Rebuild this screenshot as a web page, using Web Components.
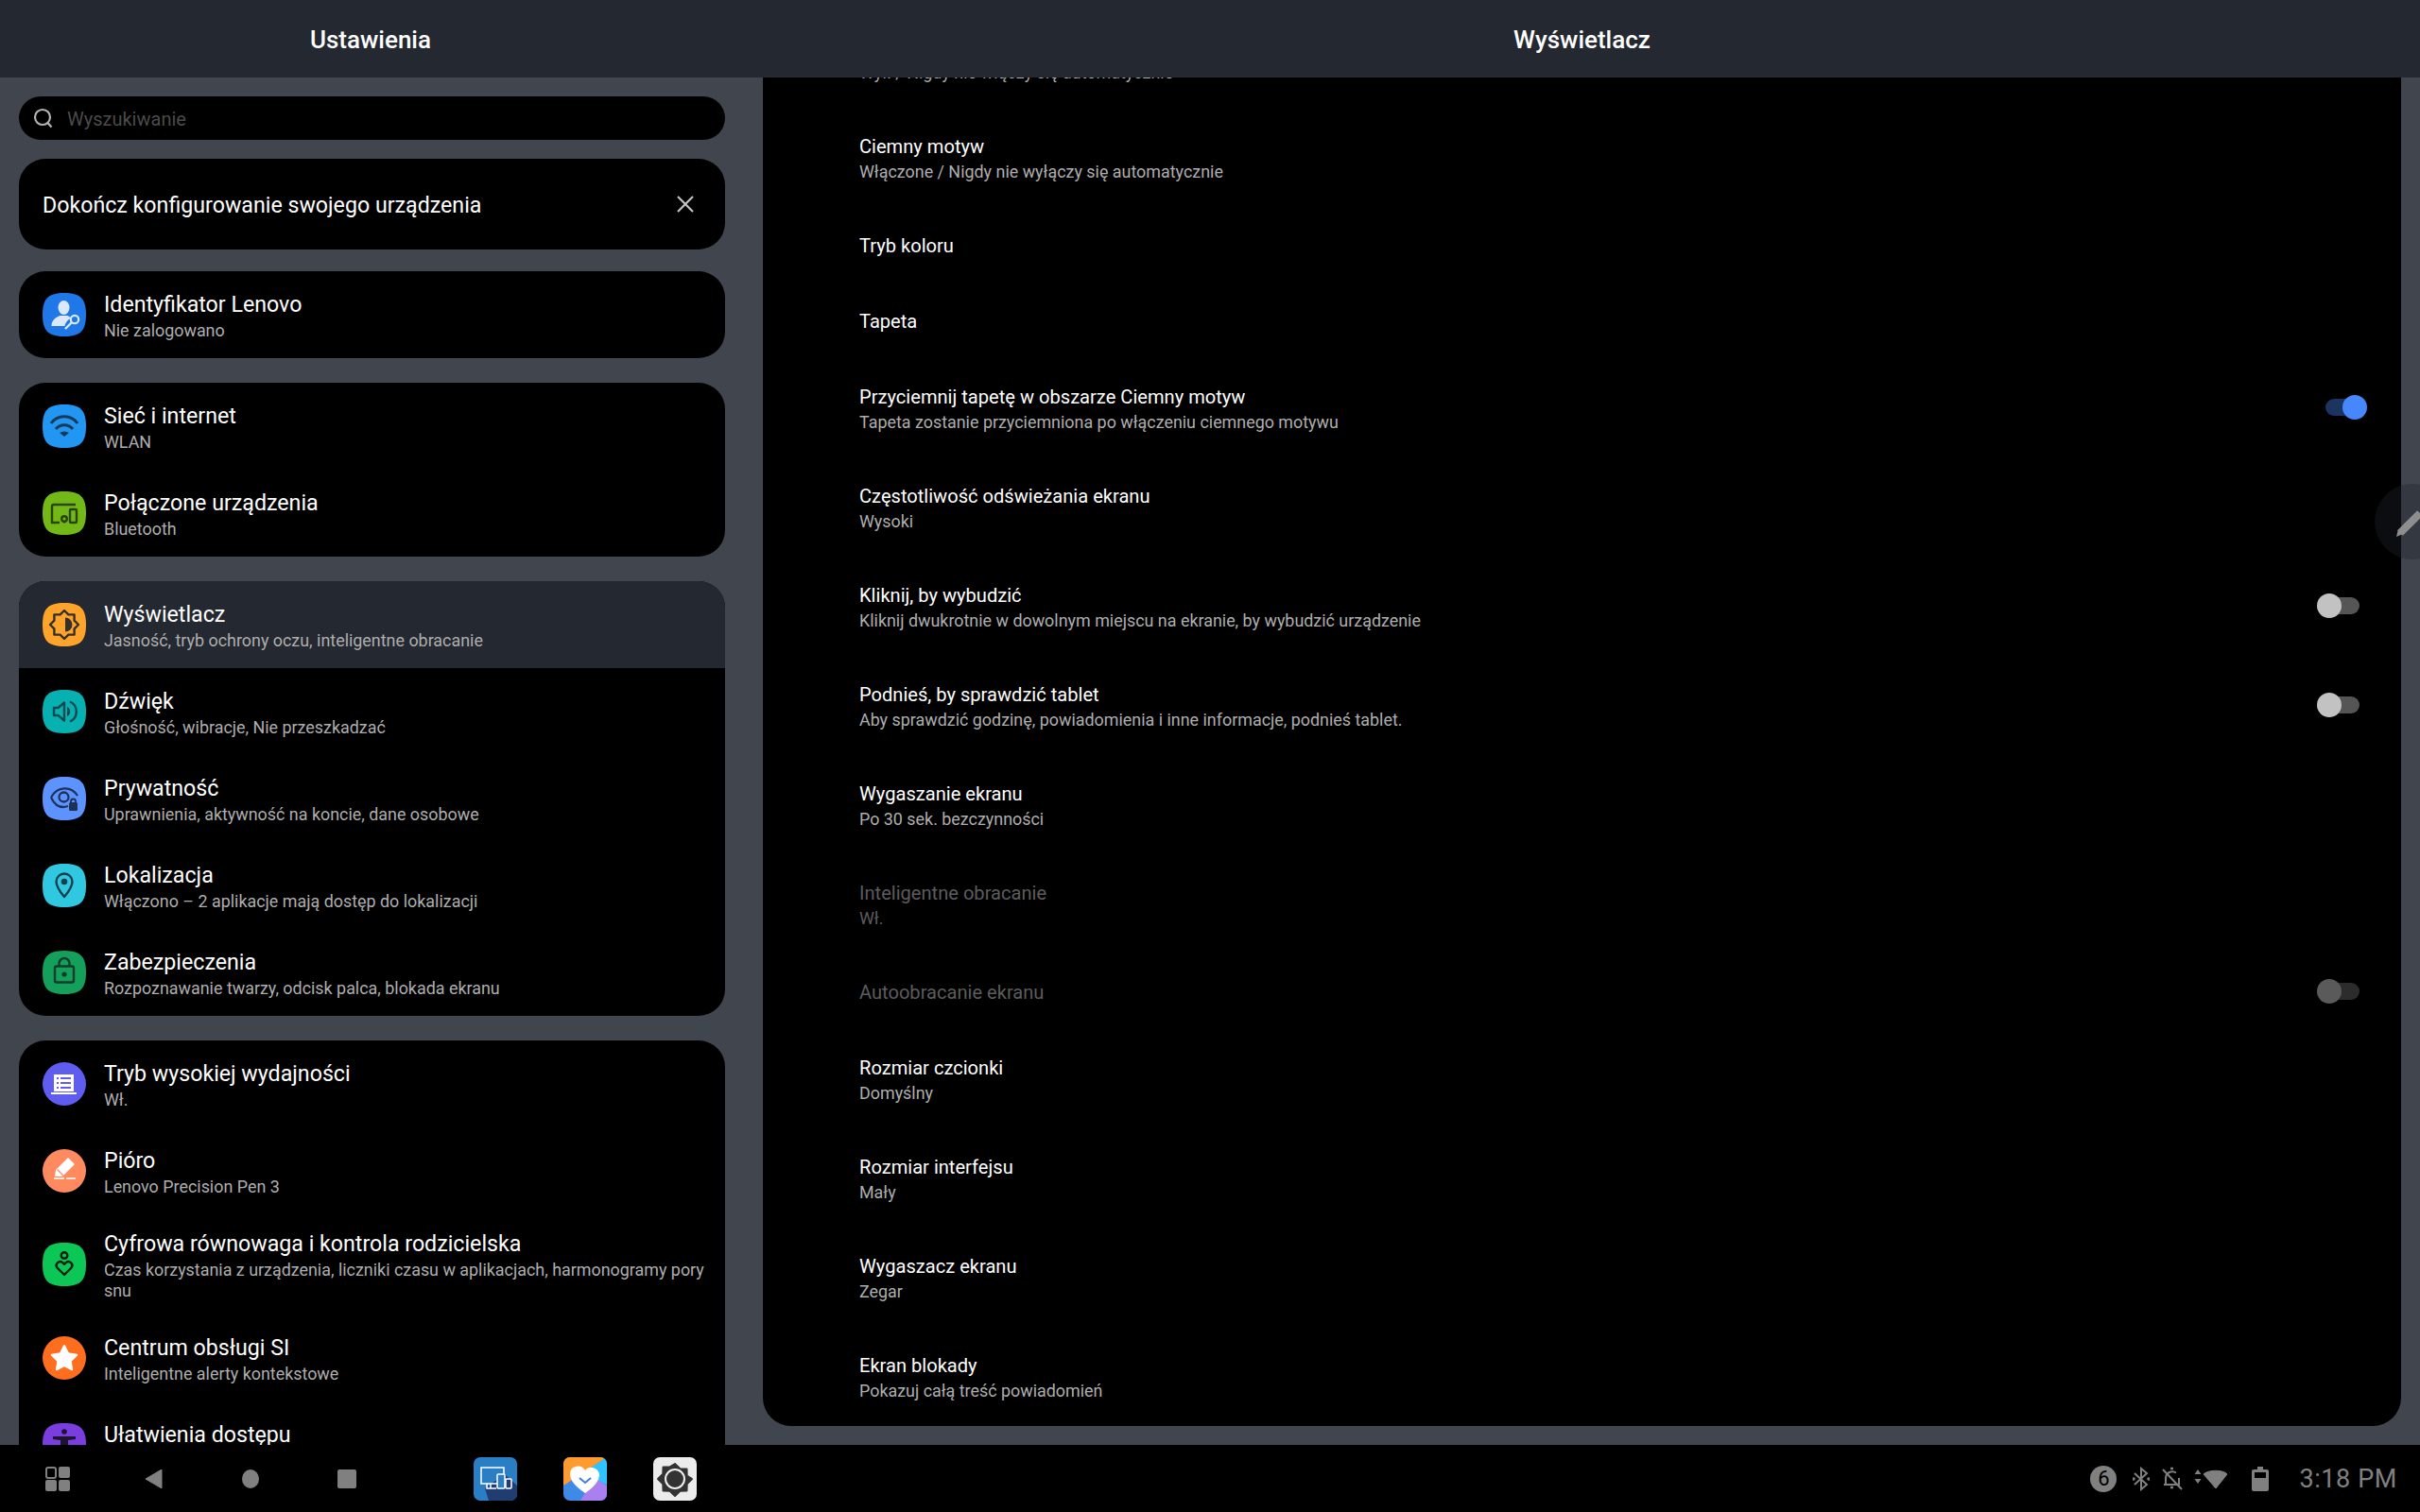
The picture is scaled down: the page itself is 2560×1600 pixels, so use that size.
<!DOCTYPE html>
<html lang="pl">
<head>
<meta charset="utf-8">
<title>Ustawienia</title>
<style>
html,body{margin:0;width:2560px;height:1600px;overflow:hidden;background:#41464e;font-family:Roboto,"Liberation Sans",sans-serif;}
</style>
</head>
<body>
<settings-app>
  <span slot="left-title">Ustawienia</span>
  <span slot="right-title">Wyświetlacz</span>

  <search-box slot="side" placeholder="Wyszukiwanie"></search-box>
  <setup-banner slot="side">Dokończ konfigurowanie swojego urządzenia</setup-banner>

  <settings-group slot="side">
    <settings-item label="Identyfikator Lenovo" sub="Nie zalogowano" color="#1f77e8">
      <svg viewBox="0 0 46 46"><ellipse cx="22.5" cy="15.5" rx="6" ry="7.500" fill="#dbe8fc"/><path d="M9.500 35c0-6 4-9 9-11h8c2 1 3 2 4 3-4 1-6 4-7 8z" fill="#dbe8fc"/><circle cx="34" cy="28" r="4.200" fill="none" stroke="#dbe8fc" stroke-width="2.200"/><path d="M31 31l-7 7" stroke="#dbe8fc" stroke-width="2.400"/></svg>
    </settings-item>
  </settings-group>

  <settings-group slot="side">
    <settings-item label="Sieć i internet" sub="WLAN" color="#2196f3">
      <svg viewBox="0 0 46 46" fill="none" stroke="#173a58" stroke-width="3"><path d="M9 20a17 17 0 0 1 28 0"/><path d="M14 26a11.500 11.500 0 0 1 18 0"/><path d="M18 30q5-3 10 0l-5 4z" fill="#173a58" stroke="none"/></svg>
    </settings-item>
    <settings-item label="Połączone urządzenia" sub="Bluetooth" color="#72b816">
      <svg viewBox="0 0 46 46" fill="none" stroke="#2a4410" stroke-width="2.4"><path d="M35 14H12a2 2 0 0 0-2 2v17h8"/><rect x="29" y="19" width="7" height="14" rx="1"/><circle cx="23" cy="29" r="2.8"/><path d="M23 32v1.5"/></svg>
    </settings-item>
  </settings-group>

  <settings-group slot="side">
    <settings-item label="Wyświetlacz" sub="Jasność, tryb ochrony oczu, inteligentne obracanie" color="#ffa42b" selected>
      <svg viewBox="0 0 46 46" fill="none" stroke="#33302a" stroke-width="2.4" stroke-linejoin="round"><path d="M23 8l4.400 4.400 6.200 0 0 6.200L38 23l-4.400 4.400 0 6.200-6.200 0L23 38l-4.400-4.400-6.200 0 0-6.200L8 23l4.400-4.400 0-6.200 6.200 0z"/><path d="M24 15.500a7.500 7.500 0 0 1 0 15z" fill="#33302a" stroke="none"/></svg>
    </settings-item>
    <settings-item label="Dźwięk" sub="Głośność, wibracje, Nie przeszkadzać" color="#08b1b1">
      <svg viewBox="0 0 46 46" fill="none" stroke="#0d4a50" stroke-width="2.400"><path d="M12 19h4.500l6.500-5.500v19L16.500 27H12z" stroke-linejoin="round"/><path d="M26 18a5.500 5.500 0 0 1 0 10z" fill="#0d4a50" stroke="none"/><path d="M29 12.500a11.500 11.500 0 0 1 0 21"/></svg>
    </settings-item>
    <settings-item label="Prywatność" sub="Uprawnienia, aktywność na koncie, dane osobowe" color="#5c93ff">
      <svg viewBox="0 0 46 46" fill="none" stroke="#1e3158" stroke-width="2.300"><path d="M9 22C15 10 30 9 37 20M27 31C19 34 13 30 9 22"/><circle cx="22.500" cy="21.500" r="5"/><rect x="28" y="27" width="9" height="9" rx="1.500" fill="#1e3158" stroke="none"/><path d="M30 28v-2a2.500 2.500 0 0 1 5 0v2" stroke-width="1.800"/></svg>
    </settings-item>
    <settings-item label="Lokalizacja" sub="Włączono – 2 aplikacje mają dostęp do lokalizacji" color="#2fc8e0">
      <svg viewBox="0 0 46 46" fill="none" stroke="#153f4c" stroke-width="2.400"><path d="M23 35C17.500 28.500 14.500 24 14.500 19a8.500 8.500 0 0 1 17 0c0 5-3 9.500-8.500 16z" stroke-linejoin="round"/><circle cx="23" cy="19" r="3.300" fill="#153f4c" stroke="none"/></svg>
    </settings-item>
    <settings-item label="Zabezpieczenia" sub="Rozpoznawanie twarzy, odcisk palca, blokada ekranu" color="#14a05a">
      <svg viewBox="0 0 46 46" fill="none" stroke="#123c2a" stroke-width="2.400"><rect x="13" y="16.500" width="20" height="17" rx="2"/><path d="M17.500 16.500V13.500a5.500 5.500 0 0 1 11 0v3"/><circle cx="23" cy="25" r="2.600" fill="#123c2a" stroke="none"/></svg>
    </settings-item>
  </settings-group>

  <settings-group slot="side">
    <settings-item label="Tryb wysokiej wydajności" sub="Wł." color="#5f5cf0" round>
      <svg viewBox="0 0 46 46"><rect x="12" y="13" width="21" height="18" fill="#fff"/><path d="M9 33h27" stroke="#fff" stroke-width="2"/><path d="M19 17h11M19 22h11M19 27h11M15 17h2M15 22h2M15 27h2" stroke="#5f5cf0" stroke-width="1.800"/></svg>
    </settings-item>
    <settings-item label="Pióro" sub="Lenovo Precision Pen 3" color="#ff8a5f" round>
      <svg viewBox="0 0 46 46"><path d="M13 29l1-7L27 9l7 7-13 13z" fill="#fff"/><path d="M12 31h11M25 31h10" stroke="#fff" stroke-width="1.300"/><path d="M15.500 21.500l7 7" stroke="#ff8a5f" stroke-width="1.200"/></svg>
    </settings-item>
    <settings-item label="Cyfrowa równowaga i kontrola rodzicielska" sub="Czas korzystania z urządzenia, liczniki czasu w aplikacjach, harmonogramy pory snu" color="#0cc655">
      <svg viewBox="0 0 46 46" fill="none" stroke="#06200f" stroke-width="2.400"><circle cx="23" cy="13.500" r="3.300"/><path d="M23 34l-7.500-7.500a4 4 0 0 1 5.600-5.600l1.900 1.900 1.900-1.900a4 4 0 0 1 5.600 5.600z" stroke-linejoin="round"/></svg>
    </settings-item>
    <settings-item label="Centrum obsługi SI" sub="Inteligentne alerty kontekstowe" color="#ff6d1f" round>
      <svg viewBox="0 0 46 46"><path d="M23 10l4.100 8.300 9.200 1.400-6.600 6.500 1.500 9.100L23 31l-8.200 4.300 1.500-9.100-6.600-6.500 9.200-1.400z" fill="#fff" stroke="#fff" stroke-width="2" stroke-linejoin="round"/></svg>
    </settings-item>
    <settings-item label="Ułatwienia dostępu" sub="" color="#7a3ee0">
      <svg viewBox="0 0 46 46"><circle cx="23" cy="9" r="2.800" fill="#1c1430"/><path d="M11 14h24v3l-8 1v13h-8V18l-8-1z" fill="#1c1430"/></svg>
    </settings-item>
  </settings-group>

  <detail-row slot="detail" sub="Wył. / Nigdy nie włączy się automatycznie"></detail-row>
  <detail-row slot="detail" label="Ciemny motyw" sub="Włączone / Nigdy nie wyłączy się automatycznie"></detail-row>
  <detail-row slot="detail" label="Tryb koloru"></detail-row>
  <detail-row slot="detail" label="Tapeta"></detail-row>
  <detail-row slot="detail" label="Przyciemnij tapetę w obszarze Ciemny motyw" sub="Tapeta zostanie przyciemniona po włączeniu ciemnego motywu"><toggle-switch checked></toggle-switch></detail-row>
  <detail-row slot="detail" label="Częstotliwość odświeżania ekranu" sub="Wysoki"></detail-row>
  <detail-row slot="detail" label="Kliknij, by wybudzić" sub="Kliknij dwukrotnie w dowolnym miejscu na ekranie, by wybudzić urządzenie"><toggle-switch></toggle-switch></detail-row>
  <detail-row slot="detail" label="Podnieś, by sprawdzić tablet" sub="Aby sprawdzić godzinę, powiadomienia i inne informacje, podnieś tablet."><toggle-switch></toggle-switch></detail-row>
  <detail-row slot="detail" label="Wygaszanie ekranu" sub="Po 30 sek. bezczynności"></detail-row>
  <detail-row slot="detail" label="Inteligentne obracanie" sub="Wł." disabled></detail-row>
  <detail-row slot="detail" label="Autoobracanie ekranu" disabled><toggle-switch disabled></toggle-switch></detail-row>
  <detail-row slot="detail" label="Rozmiar czcionki" sub="Domyślny"></detail-row>
  <detail-row slot="detail" label="Rozmiar interfejsu" sub="Mały"></detail-row>
  <detail-row slot="detail" label="Wygaszacz ekranu" sub="Zegar"></detail-row>
  <detail-row slot="detail" label="Ekran blokady" sub="Pokazuj całą treść powiadomień"></detail-row>

  <task-bar slot="bar"></task-bar>
</settings-app>

<script>
// shell: header, two panes, floating pen button, taskbar
const appTemplate = document.createElement('template');
appTemplate.innerHTML = `
<style>
:host{display:grid;position:relative;width:2560px;height:1600px;grid-template-columns:787px 1773px;grid-template-rows:82px 1447px 71px;overflow:hidden;color:#fff;}
.head{background:#242830;display:flex;align-items:center;font-size:26px;font-weight:500;padding-top:2px;box-sizing:border-box;}
.head.l{justify-content:center;padding-right:3px;}
.head.r{padding-left:20px;padding-right:20px;justify-content:center;}
.side{display:flex;flex-direction:column;gap:26px;padding:20px;overflow:hidden;min-height:0;}
.pane{display:flex;flex-direction:column;justify-content:flex-end;overflow:hidden;min-height:0;margin:0 20px 20px 20px;background:#000;border-radius:0 0 30px 30px;}
.bar{grid-column:1 / 3;}
.pen{position:absolute;left:2512px;top:512px;width:48px;height:80px;}
</style>
<div class="head l"><slot name="left-title"></slot></div>
<div class="head r"><slot name="right-title"></slot></div>
<div class="side"><slot name="side"></slot></div>
<div class="pane"><slot name="detail"></slot></div>
<div class="bar"><slot name="bar"></slot></div>
<svg class="pen" viewBox="0 0 48 80"><circle cx="40" cy="40" r="40" fill="rgba(30,35,43,.37)"/><path d="M27 52L48 31" stroke="#8e8e8e" stroke-width="8"/><path d="M23 56l2-8 5 5z" fill="#8e8e8e"/></svg>`;
class SettingsApp extends HTMLElement{
  constructor(){
    super();
    this.attachShadow({mode:'open'});
    this.shadowRoot.appendChild(appTemplate.content.cloneNode(true));
  }
}
customElements.define('settings-app', SettingsApp);

const searchTemplate = document.createElement('template');
searchTemplate.innerHTML = `
<style>
:host{display:flex;flex:none;align-items:center;height:46px;background:#000;border-radius:23px;padding-left:15px;margin-bottom:-6px;font-size:20px;color:#4a4a4a;}
svg{width:22px;height:22px;margin-right:14px;}
span{padding-top:2px;}
</style>
<svg viewBox="0 0 22 22" fill="none" stroke="#b4b4b4" stroke-width="2.200"><circle cx="10" cy="10" r="8"/><path d="M15.500 16l4 4.500"/></svg>
<span id="ph"></span>`;
class SearchBox extends HTMLElement{
  constructor(){
    super();
    this.attachShadow({mode:'open'});
    this.shadowRoot.appendChild(searchTemplate.content.cloneNode(true));
    this.shadowRoot.getElementById('ph').innerText = this.getAttribute('placeholder');
  }
}
customElements.define('search-box', SearchBox);

const bannerTemplate = document.createElement('template');
bannerTemplate.innerHTML = `
<style>
:host{display:flex;flex:none;align-items:center;justify-content:space-between;height:96px;background:#000;border-radius:28px;padding:0 32px 0 25px;margin-bottom:-3px;font-size:23.200px;color:#fff;}
svg{width:20px;height:20px;}
span{padding-top:2px;}
</style>
<span><slot></slot></span>
<svg viewBox="0 0 20 20" stroke="#c4c4c4" stroke-width="2.200"><path d="M2 2l16 16M18 2L2 18"/></svg>`;
class SetupBanner extends HTMLElement{
  constructor(){
    super();
    this.attachShadow({mode:'open'});
    this.shadowRoot.appendChild(bannerTemplate.content.cloneNode(true));
  }
}
customElements.define('setup-banner', SetupBanner);

const groupTemplate = document.createElement('template');
groupTemplate.innerHTML = `
<style>
:host{display:block;flex:none;background:#000;border-radius:28px;overflow:hidden;}
</style>
<slot></slot>`;
class SettingsGroup extends HTMLElement{
  constructor(){
    super();
    this.attachShadow({mode:'open'});
    this.shadowRoot.appendChild(groupTemplate.content.cloneNode(true));
  }
}
customElements.define('settings-group', SettingsGroup);

const itemTemplate = document.createElement('template');
itemTemplate.innerHTML = `
<style>
:host{display:flex;align-items:center;min-height:92px;box-sizing:border-box;padding:14px 16px 14px 25px;gap:19px;}
:host([selected]){background:#242830;}
.tile{flex:none;width:46px;height:46px;clip-path:path("M23 0C40 0 46 6 46 23C46 40 40 46 23 46C6 46 0 40 0 23C0 6 6 0 23 0Z");}
:host([round]) .tile{clip-path:circle(23px);}
::slotted(svg){display:block;width:46px;height:46px;}
.txt{padding-top:2px;}
.t{font-size:23.200px;line-height:30px;color:#fff;}
.s{font-size:17.900px;line-height:22px;margin-top:2px;color:#aeaeae;}
</style>
<div class="tile"><slot></slot></div>
<div class="txt"><div class="t"></div><div class="s"></div></div>`;
class SettingsItem extends HTMLElement{
  constructor(){
    super();
    this.attachShadow({mode:'open'});
    this.shadowRoot.appendChild(itemTemplate.content.cloneNode(true));
    this.shadowRoot.querySelector('.tile').style.background = this.getAttribute('color');
    this.shadowRoot.querySelector('.t').innerText = this.getAttribute('label');
    const s = this.shadowRoot.querySelector('.s');
    s.innerText = this.getAttribute('sub');
    if(!s.innerText) s.innerHTML = '&nbsp;';
  }
}
customElements.define('settings-item', SettingsItem);

const rowTemplate = document.createElement('template');
rowTemplate.innerHTML = `
<style>
:host{display:flex;flex:none;align-items:center;justify-content:space-between;min-height:80px;padding:0 36px 0 102px;}
:host([sub]){min-height:105px;}
.txt{padding-top:2px;}
.t{font-size:20.100px;line-height:26px;min-height:26px;color:#fff;}
.s{font-size:17.900px;line-height:22px;margin-top:3px;color:#aeaeae;}
:host([disabled]) .t,:host([disabled]) .s{color:#5c5c5c;}
</style>
<div class="txt"><div class="t"></div><div class="s"></div></div>
<slot></slot>`;
class DetailRow extends HTMLElement{
  constructor(){
    super();
    this.attachShadow({mode:'open'});
    this.shadowRoot.appendChild(rowTemplate.content.cloneNode(true));
    this.shadowRoot.querySelector('.t').innerText = this.getAttribute('label') || '';
    const s = this.shadowRoot.querySelector('.s');
    if(this.hasAttribute('sub')) s.innerText = this.getAttribute('sub');
    else s.remove();
  }
}
customElements.define('detail-row', DetailRow);

const toggleTemplate = document.createElement('template');
toggleTemplate.innerHTML = `
<style>
:host{display:block;position:relative;width:53px;height:26px;margin-bottom:1px;}
.track{position:absolute;left:13px;width:32px;top:4px;height:18px;border-radius:9px;background:#555;}
.knob{position:absolute;left:0;top:0;width:26px;height:26px;border-radius:50%;background:#c2c2c2;}
:host([checked]) .track{left:9px;width:40px;background:#1b3560;}
:host([checked]) .knob{left:27px;background:#4688fb;}
:host([disabled]) .track{background:#2c2c2c;}
:host([disabled]) .knob{background:#5a5a5a;}
</style>
<div class="track"></div><div class="knob"></div>`;
class ToggleSwitch extends HTMLElement{
  constructor(){
    super();
    this.attachShadow({mode:'open'});
    this.shadowRoot.appendChild(toggleTemplate.content.cloneNode(true));
  }
}
customElements.define('toggle-switch', ToggleSwitch);

const barTemplate = document.createElement('template');
barTemplate.innerHTML = `
<style>
:host{display:flex;align-items:center;height:71px;background:#000;padding:0 24px 0 10px;color:#808080;}
.nav{display:flex;flex:none;width:102px;justify-content:center;align-items:center;}
.apps{display:flex;gap:49px;margin-left:83px;}
.apps svg{display:block;width:46px;height:46px;}
.tray{display:flex;align-items:center;margin-left:auto;}
.num{display:flex;align-items:center;justify-content:center;width:28px;height:28px;border-radius:50%;background:#808080;color:#000;font-size:22px;}
.time{font-size:27px;margin-left:32px;letter-spacing:.6px;}
</style>
<div class="nav"><svg width="26" height="26" viewBox="0 0 26 26" fill="#808080"><rect x="1" y="1" width="10" height="11" rx="2" fill="none" stroke="#808080" stroke-width="2"/><rect x="14" y="0" width="12" height="12" rx="2"/><rect y="14" width="12" height="12" rx="2"/><rect x="14" y="14" width="12" height="12" rx="2"/></svg></div>
<div class="nav"><svg width="18" height="20" viewBox="0 0 18 20"><path d="M17 0v20L0 10z" fill="#808080" stroke="#808080" stroke-width="1" stroke-linejoin="round"/></svg></div>
<div class="nav"><svg width="18" height="20" viewBox="0 0 18 20"><ellipse cx="9" cy="10" rx="9" ry="10" fill="#808080"/></svg></div>
<div class="nav"><svg width="20" height="20" viewBox="0 0 20 20"><rect width="20" height="20" rx="2" fill="#808080"/></svg></div>
<div class="apps">
  <svg viewBox="0 0 46 46"><rect width="46" height="46" rx="7" fill="#2a7fc4"/><path d="M16 46l-4-13 21-15 13 12v9a7 7 0 0 1-7 7z" fill="#1f3d70"/><g fill="none" stroke="#fff" stroke-width="1.500"><path d="M25 28H8V11h24v7"/><path d="M14 28v5h10M18 28v5"/><rect x="25" y="18" width="8" height="15" rx="1" fill="#2a7fc4"/><rect x="34" y="23" width="6" height="10" rx="1"/></g></svg>
  <svg viewBox="0 0 46 46"><defs><clipPath id="c"><rect width="46" height="46" rx="7"/></clipPath></defs><g clip-path="url(#c)"><rect width="46" height="46" fill="#3f8ae6"/><path d="M0 0h46L0 30z" fill="#ff9a2e"/><path d="M46 0L20 17l26 12z" fill="#2fc4ff"/><path d="M33 22L46 30V46H18z" fill="#a880f0"/></g><path d="M23 38C13 31 7 25 7 18a8.500 8.500 0 0 1 16-4 8.500 8.500 0 0 1 15 4c0 7-5 13-15 20z" fill="#fff"/><path d="M17 22l6 5 6-5" fill="none" stroke="#3f7ee0" stroke-width="2"/></svg>
  <svg viewBox="0 0 46 46"><rect width="46" height="46" rx="7" fill="#ececec"/><path d="M23 7l5.400 5.200 7.100.2.200 7.100L41 23l-5.300 5.400-.2 7.100-7.100.2L23 41l-5.400-5.300-7.100-.2-.2-7.100L5 23l5.300-5.400.2-7.100 7.100-.2z" fill="#333" stroke="#333" stroke-width="2" stroke-linejoin="round"/><circle cx="23" cy="23" r="10" fill="none" stroke="#f0f0f0" stroke-width="2"/></svg>
</div>
<div class="tray">
  <div class="num">6</div>
  <svg style="margin-left:17px" width="18" height="26" viewBox="0 0 18 26" fill="none" stroke="#808080" stroke-width="2"><path d="M2 7l13 12-6 5V2l6 5L2 19"/><circle cx="1" cy="13" r=".8"/><circle cx="17" cy="13" r=".8"/></svg>
  <svg style="margin-left:13px" width="22" height="26" viewBox="0 0 22 26" fill="none" stroke="#808080" stroke-width="2"><path d="M4 19V12a7 7 0 0 1 11-5.500M18 12v7H2"/><path d="M9 2h3M9 22h3" stroke-width="2.500"/><path d="M1 3l20 21"/></svg>
  <svg style="margin-left:12px" width="36" height="24" viewBox="0 0 36 24" fill="#808080"><path d="M4 2L7.500 7h-7zM4 17L.5 12h7z"/><path d="M10 7C15 2 31 2 35 7L23 22z" stroke="#808080" stroke-linejoin="round"/></svg>
  <svg style="margin-left:25px" width="18" height="26" viewBox="0 0 18 26"><path d="M6 0h6v3h4a2 2 0 0 1 2 2v19a2 2 0 0 1-2 2H2a2 2 0 0 1-2-2V5a2 2 0 0 1 2-2h4z" fill="#808080"/><rect x="3" y="6" width="12" height="6" fill="#000"/></svg>
  <span class="time">3:18 PM</span>
</div>`;
class TaskBar extends HTMLElement{
  constructor(){
    super();
    this.attachShadow({mode:'open'});
    this.shadowRoot.appendChild(barTemplate.content.cloneNode(true));
  }
}
customElements.define('task-bar', TaskBar);
</script>
</body>
</html>
